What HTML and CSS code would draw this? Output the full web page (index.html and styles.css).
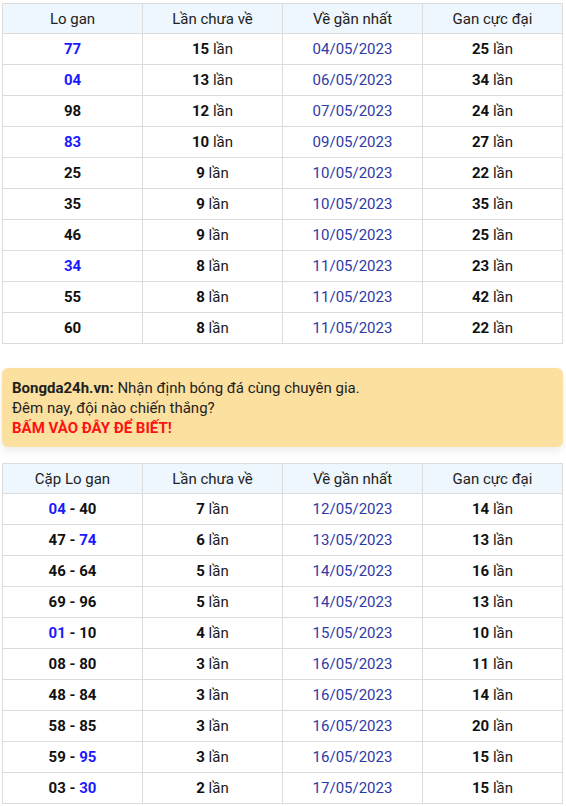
FILE: index.html
```html
<!DOCTYPE html>
<html lang="vi">
<head>
<meta charset="utf-8">
<link rel="stylesheet" href="styles.css">
</head>
<body>
<div class="page">
<table class="gan">
<thead><tr><th>Lo gan</th><th>Lần chưa về</th><th>Về gần nhất</th><th>Gan cực đại</th></tr></thead>
<tbody>
<tr><td><b class="bl">77</b></td><td><b>15</b> lần</td><td class="dt">04/05/2023</td><td><b>25</b> lần</td></tr>
<tr><td><b class="bl">04</b></td><td><b>13</b> lần</td><td class="dt">06/05/2023</td><td><b>34</b> lần</td></tr>
<tr><td><b>98</b></td><td><b>12</b> lần</td><td class="dt">07/05/2023</td><td><b>24</b> lần</td></tr>
<tr><td><b class="bl">83</b></td><td><b>10</b> lần</td><td class="dt">09/05/2023</td><td><b>27</b> lần</td></tr>
<tr><td><b>25</b></td><td><b>9</b> lần</td><td class="dt">10/05/2023</td><td><b>22</b> lần</td></tr>
<tr><td><b>35</b></td><td><b>9</b> lần</td><td class="dt">10/05/2023</td><td><b>35</b> lần</td></tr>
<tr><td><b>46</b></td><td><b>9</b> lần</td><td class="dt">10/05/2023</td><td><b>25</b> lần</td></tr>
<tr><td><b class="bl">34</b></td><td><b>8</b> lần</td><td class="dt">11/05/2023</td><td><b>23</b> lần</td></tr>
<tr><td><b>55</b></td><td><b>8</b> lần</td><td class="dt">11/05/2023</td><td><b>42</b> lần</td></tr>
<tr><td><b>60</b></td><td><b>8</b> lần</td><td class="dt">11/05/2023</td><td><b>22</b> lần</td></tr>
</tbody>
</table>

<div class="promo">
<div><b>Bongda24h.vn:</b> Nhận định bóng đá cùng chuyên gia.</div>
<div>Đêm nay, đội nào chiến thắng?</div>
<div class="red">BẤM VÀO ĐÂY ĐỂ BIẾT!</div>
</div>

<table class="gan">
<thead><tr><th>Cặp Lo gan</th><th>Lần chưa về</th><th>Về gần nhất</th><th>Gan cực đại</th></tr></thead>
<tbody>
<tr><td><b class="bl">04</b> <b>-</b> <b>40</b></td><td><b>7</b> lần</td><td class="dt">12/05/2023</td><td><b>14</b> lần</td></tr>
<tr><td><b>47</b> <b>-</b> <b class="bl">74</b></td><td><b>6</b> lần</td><td class="dt">13/05/2023</td><td><b>13</b> lần</td></tr>
<tr><td><b>46</b> <b>-</b> <b>64</b></td><td><b>5</b> lần</td><td class="dt">14/05/2023</td><td><b>16</b> lần</td></tr>
<tr><td><b>69</b> <b>-</b> <b>96</b></td><td><b>5</b> lần</td><td class="dt">14/05/2023</td><td><b>13</b> lần</td></tr>
<tr><td><b class="bl">01</b> <b>-</b> <b>10</b></td><td><b>4</b> lần</td><td class="dt">15/05/2023</td><td><b>10</b> lần</td></tr>
<tr><td><b>08</b> <b>-</b> <b>80</b></td><td><b>3</b> lần</td><td class="dt">16/05/2023</td><td><b>11</b> lần</td></tr>
<tr><td><b>48</b> <b>-</b> <b>84</b></td><td><b>3</b> lần</td><td class="dt">16/05/2023</td><td><b>14</b> lần</td></tr>
<tr><td><b>58</b> <b>-</b> <b>85</b></td><td><b>3</b> lần</td><td class="dt">16/05/2023</td><td><b>20</b> lần</td></tr>
<tr><td><b>59</b> <b>-</b> <b class="bl">95</b></td><td><b>3</b> lần</td><td class="dt">16/05/2023</td><td><b>15</b> lần</td></tr>
<tr><td><b>03</b> <b>-</b> <b class="bl">30</b></td><td><b>2</b> lần</td><td class="dt">17/05/2023</td><td><b>15</b> lần</td></tr>
</tbody>
</table>
</div>
</body>
</html>
```

FILE: styles.css
```css
html, body {
  margin: 0;
  padding: 0;
  background: #fff;
}
body {
  font-family: Roboto, "Noto Sans", Arial, sans-serif;
  font-size: 15px;
  color: #1a1a1a;
}
.page {
  width: 561px;
  padding: 3px 0 0 2px;
}
.gan {
  width: 561px;
  border-collapse: collapse;
  table-layout: fixed;
}
.gan th, .gan td {
  border: 1px solid #dcdcdc;
  text-align: center;
  padding: 0;
  height: 30px;
  line-height: 30px;
  white-space: nowrap;
}
.gan th {
  background: #eef7fe;
  font-weight: 400;
  color: #222;
  height: 29px;
  line-height: 28px;
}
.gan td b {
  font-weight: 700;
  color: #111;
}
.gan td b.bl {
  color: #1a1aff;
}
.gan td.dt {
  color: #2e3aa6;
}
.promo {
  margin: 24px 0 16px 0;
  background: #fbe0a0;
  border-radius: 6px;
  box-shadow: 0 4px 8px rgba(0,0,0,0.08);
  padding: 10px 10px 10px 10px;
  line-height: 20px;
  font-size: 15px;
  color: #1f1f1f;
  height: 59px;
}
.promo b {
  font-weight: 700;
}
.promo .red {
  color: #ff1111;
  font-weight: 700;
}
```
